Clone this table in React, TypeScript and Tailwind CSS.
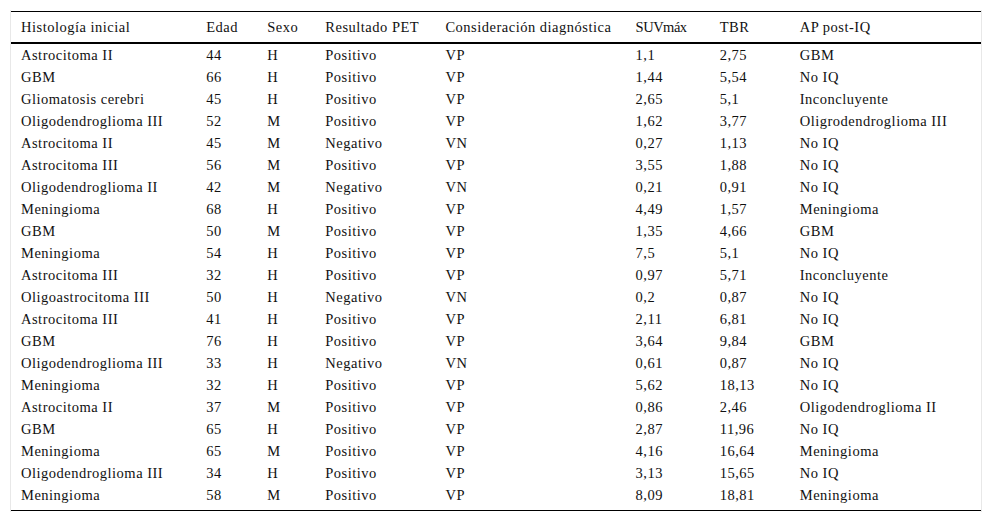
import React from "react";

const rows: string[][] = [
  ["Astrocitoma II", "44", "H", "Positivo", "VP", "1,1", "2,75", "GBM"],
  ["GBM", "66", "H", "Positivo", "VP", "1,44", "5,54", "No IQ"],
  ["Gliomatosis cerebri", "45", "H", "Positivo", "VP", "2,65", "5,1", "Inconcluyente"],
  ["Oligodendroglioma III", "52", "M", "Positivo", "VP", "1,62", "3,77", "Oligrodendroglioma III"],
  ["Astrocitoma II", "45", "M", "Negativo", "VN", "0,27", "1,13", "No IQ"],
  ["Astrocitoma III", "56", "M", "Positivo", "VP", "3,55", "1,88", "No IQ"],
  ["Oligodendroglioma II", "42", "M", "Negativo", "VN", "0,21", "0,91", "No IQ"],
  ["Meningioma", "68", "H", "Positivo", "VP", "4,49", "1,57", "Meningioma"],
  ["GBM", "50", "M", "Positivo", "VP", "1,35", "4,66", "GBM"],
  ["Meningioma", "54", "H", "Positivo", "VP", "7,5", "5,1", "No IQ"],
  ["Astrocitoma III", "32", "H", "Positivo", "VP", "0,97", "5,71", "Inconcluyente"],
  ["Oligoastrocitoma III", "50", "H", "Negativo", "VN", "0,2", "0,87", "No IQ"],
  ["Astrocitoma III", "41", "H", "Positivo", "VP", "2,11", "6,81", "No IQ"],
  ["GBM", "76", "H", "Positivo", "VP", "3,64", "9,84", "GBM"],
  ["Oligodendroglioma III", "33", "H", "Negativo", "VN", "0,61", "0,87", "No IQ"],
  ["Meningioma", "32", "H", "Positivo", "VP", "5,62", "18,13", "No IQ"],
  ["Astrocitoma II", "37", "M", "Positivo", "VP", "0,86", "2,46", "Oligodendroglioma II"],
  ["GBM", "65", "H", "Positivo", "VP", "2,87", "11,96", "No IQ"],
  ["Meningioma", "65", "M", "Positivo", "VP", "4,16", "16,64", "Meningioma"],
  ["Oligodendroglioma III", "34", "H", "Positivo", "VP", "3,13", "15,65", "No IQ"],
  ["Meningioma", "58", "M", "Positivo", "VP", "8,09", "18,81", "Meningioma"],
];

const headers = [
  "Histología inicial",
  "Edad",
  "Sexo",
  "Resultado PET",
  "Consideración diagnóstica",
  "SUVmáx",
  "TBR",
  "AP post-IQ",
];

const widths = ["w-[185px]", "w-[61px]", "w-[58px]", "w-[120px]", "w-[190px]", "w-[84px]", "w-[80px]", "w-[191px]"];

export default function App() {
  return (
    <div className="min-h-[523px] bg-white pt-[10px]">
      <div
        className="ml-[10px] w-[972px] border-x border-[#e8e8e8] pt-[1px] pb-[1px]"
        style={{ fontFamily: '"Liberation Serif", "Times New Roman", serif' }}
      >
        <table className="w-[970px] table-fixed border-collapse text-[14.5px] tracking-[0.5px] leading-[22px] text-[#111]">
          <colgroup>
            {widths.map((w, i) => (
              <col key={i} className={w} />
            ))}
          </colgroup>
          <thead>
            <tr className="h-[31px] border-t border-black border-b-2">
              {headers.map((h) => (
                <th
                  key={h}
                  className={
                    h === "SUVmáx"
                      ? "pl-[10px] text-left font-normal align-middle whitespace-nowrap tracking-[-0.5px]"
                      : "pl-[10px] text-left font-normal align-middle whitespace-nowrap"
                  }
                >
                  {h}
                </th>
              ))}
            </tr>
          </thead>
          <tbody className="border-b border-black">
            {rows.map((r, i) => (
              <tr key={i} className={i === rows.length - 1 ? "h-[27px] align-top" : "h-[22px]"}>
                {r.map((c, j) => (
                  <td key={j} className="pl-[10px] whitespace-nowrap">
                    {c}
                  </td>
                ))}
              </tr>
            ))}
          </tbody>
        </table>
      </div>
    </div>
  );
}
